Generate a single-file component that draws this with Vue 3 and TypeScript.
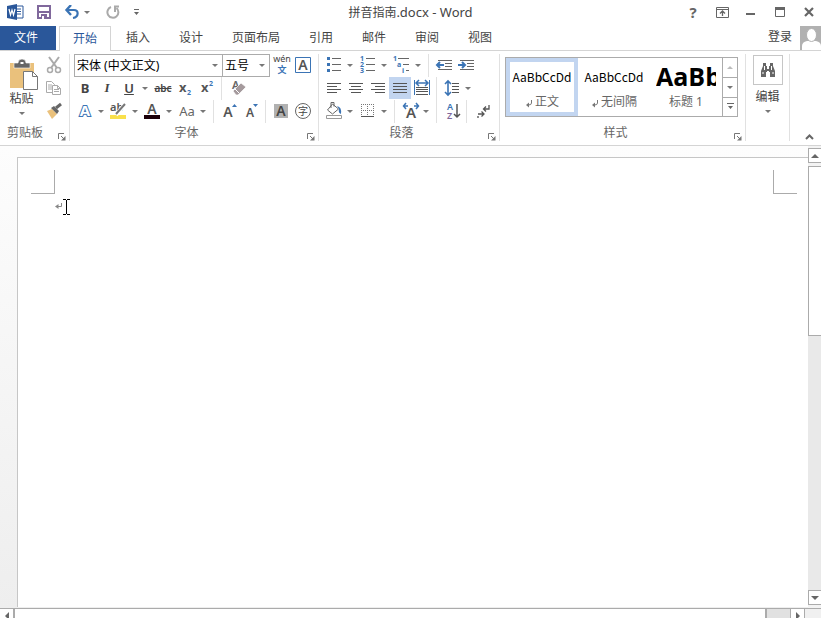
<script setup lang="ts">
import { ref } from 'vue'

interface Align { id: string; label: string; lines: [number, number][] }
interface Style { id: string; name: string; sample: string; mark: boolean; big: boolean }

const tabs = ['开始', '插入', '设计', '页面布局', '引用', '邮件', '审阅', '视图']
const activeTab = ref('开始')

const aligns: Align[] = [
  { id: 'left', label: '左对齐', lines: [[4, 14], [4, 10], [4, 14], [4, 10]] },
  { id: 'center', label: '居中', lines: [[4, 14], [6, 10], [4, 14], [6, 10]] },
  { id: 'right', label: '右对齐', lines: [[4, 14], [8, 10], [4, 14], [8, 10]] },
  { id: 'justify', label: '两端对齐', lines: [[4, 14], [4, 14], [4, 14], [4, 14]] },
]
const align = ref('justify')

const styles: Style[] = [
  { id: 'body', name: '正文', sample: 'AaBbCcDd', mark: true, big: false },
  { id: 'tight', name: '无间隔', sample: 'AaBbCcDd', mark: true, big: false },
  { id: 'h1', name: '标题 1', sample: 'AaBb', mark: false, big: true },
]
const activeStyle = ref('body')
const fontName = ref('song')
const fontSize = ref('5')
</script>

<template>
  <div class="app">
    <header class="titlebar">
      <div class="quick">
        <svg class="logo" width="18" height="16" viewBox="0 0 18 16" aria-hidden="true">
          <path d="M9 2h7v12H9z" fill="#fff" stroke="#2a579a" />
          <path d="M10 5h4M10 7.500h4M10 10h4" stroke="#2a579a" />
          <path d="M0 2l10-2v16L0 14z" fill="#2a579a" />
          <path d="M2 5l1.500 6L5 6l1.500 5L8 5" fill="none" stroke="#fff" stroke-width="1.200" />
        </svg>
        <button class="qbtn save" aria-label="保存">
          <svg width="14" height="14" viewBox="0 0 14 14">
            <path d="M1 1h12v12H1z" fill="#fff" stroke="#80689c" stroke-width="2" />
            <path d="M2 7h10" stroke="#80689c" stroke-width="2" />
            <path d="M4 9h6v5H4z" fill="#80689c" /><path d="M5 11h2v3H5z" fill="#fff" />
          </svg>
        </button>
        <button class="qbtn" aria-label="撤消">
          <svg width="16" height="15" viewBox="0 0 16 15">
            <path d="M3 5h7c5 0 5 7-1 8" fill="none" stroke="#3b74b5" stroke-width="2.200" />
            <path d="M7 0L2.500 5 7 10" fill="none" stroke="#3b74b5" stroke-width="2.400" />
          </svg>
        </button>
        <button class="drop" aria-label="撤消列表"><i class="caret" /></button>
        <button class="qbtn redo" aria-label="重复">
          <svg width="15" height="15" viewBox="0 0 15 15">
            <path d="M5 2a5.500 5.500 0 1 0 5.500 1" fill="none" stroke="#aaa" stroke-width="2" />
            <path d="M13 1.500H9V7" fill="none" stroke="#aaa" stroke-width="2" />
          </svg>
        </button>
        <button class="drop custom" aria-label="自定义快速访问工具栏">
          <svg width="7" height="7" viewBox="0 0 7 7"><path d="M1 0h5v1H1zM1 3h5L3.500 6z" fill="#666" /></svg>
        </button>
      </div>
      <h1 class="title">拼音指南<span>.docx - Word</span></h1>
      <div class="window">
        <button class="help" aria-label="帮助">?</button>
        <button aria-label="功能区显示选项">
          <svg width="13" height="11" viewBox="0 0 13 11">
            <path d="M.5.5h12v10H.5zM.5 2.500h12" fill="none" stroke="#666" />
            <path d="M6.500 9V5M4 6.500L6.500 4 9 6.500" fill="none" stroke="#666" stroke-width="1.300" />
          </svg>
        </button>
        <button aria-label="最小化"><svg width="10" height="10" viewBox="0 0 10 10"><path d="M0 6h9v2H0z" fill="#666" /></svg></button>
        <button aria-label="最大化">
          <svg width="10" height="10" viewBox="0 0 10 10"><path d="M.5.5h9v9h-9z" fill="none" stroke="#666" /><path d="M0 0h10v3H0z" fill="#666" /></svg>
        </button>
        <button aria-label="关闭"><svg width="10" height="10" viewBox="0 0 10 10"><path d="M1 1l8 8M9 1L1 9" stroke="#666" stroke-width="2.200" /></svg></button>
      </div>
    </header>

    <nav class="tabs">
      <button class="file">文件</button>
      <button v-for="t in tabs" :key="t" class="tab" :class="{ active: t === activeTab }" @click="activeTab = t">{{ t }}</button>
      <a class="login" href="#">登录</a>
      <svg class="avatar" width="21" height="24" viewBox="0 0 21 24" aria-hidden="true">
        <path d="M0 0h21v24H0z" fill="#b1b1b1" />
        <path d="M2 24v-4q0-4 5-5h9q5 1 5 5v4z" fill="#fff" />
        <ellipse cx="11.500" cy="9" rx="5" ry="6.500" fill="#fff" stroke="#b1b1b1" />
      </svg>
    </nav>

    <div class="ribbon">
      <section class="group clipboard">
        <div class="body cols">
          <button class="paste">
            <svg width="28" height="32" viewBox="0 0 28 32">
              <path d="M0 4h24v25H0z" fill="#eac17c" />
              <path d="M4 9V4h4q0-4 4-4t4 4h4v5z" fill="#666" stroke="#fff" stroke-width=".6" />
              <path d="M10.500 3h3v2h-3z" fill="#fff" />
              <path d="M13.500 12.500h9l5 5v13h-14z" fill="#fff" stroke="#777" />
              <path d="M22.500 12.500v5h5" fill="none" stroke="#777" />
            </svg>
            <span>粘贴</span><i class="caret" />
          </button>
          <div class="side">
            <button class="ib" aria-label="剪切">
              <svg viewBox="0 0 22 22">
                <path d="M6 3l8 11M16 3L8 14" stroke="#aaa" stroke-width="2" />
                <circle cx="7" cy="16" r="2.500" fill="none" stroke="#aaa" stroke-width="1.500" />
                <circle cx="15" cy="16" r="2.500" fill="none" stroke="#aaa" stroke-width="1.500" />
              </svg>
            </button>
            <button class="ib" aria-label="复制">
              <svg viewBox="0 0 22 22" fill="#fff" stroke="#aaa">
                <path d="M3.500 4.500h5l3 3v8h-8zM5 8h4M5 10h4M5 12h4" />
                <path d="M9.500 8.500h5l3 3v6h-8zM14.500 8.500v3h3M11 12.500h5M11 14.500h5" />
              </svg>
            </button>
            <button class="ib" aria-label="格式刷">
              <svg viewBox="0 0 22 22">
                <path d="M4 11l5-2 5 5-5 5z" fill="#eac17c" />
                <path d="M8 8l3-2 5 5-2 3z" fill="#666" /><path d="M13 8l5-4" stroke="#666" stroke-width="3" />
              </svg>
            </button>
          </div>
        </div>
        <footer><span>剪贴板</span><button class="launch" aria-label="剪贴板设置"><svg viewBox="0 0 8 8"><path d="M.5 6V.5H6M3 3l3 3" fill="none" stroke="#777" /><path d="M7.500 3v4.500H3z" fill="#777" /></svg></button></footer>
      </section>

      <section class="group font">
        <div class="body">
          <div class="row">
            <label class="combo wide"><select v-model="fontName" aria-label="字体"><option value="song">宋体 (中文正文)</option></select><i class="caret" /></label>
            <label class="combo"><select v-model="fontSize" aria-label="字号"><option value="5">五号</option></select><i class="caret" /></label>
            <button class="ib" aria-label="拼音指南">
              <svg viewBox="0 0 22 22"><text x="12" y="8" text-anchor="middle" font-size="9" fill="#444">wén</text><text x="12" y="19" text-anchor="middle" font-size="9" font-weight="bold" fill="#3b74b5">文</text></svg>
            </button>
            <button class="ib" aria-label="字符边框">
              <svg viewBox="0 0 22 22"><path d="M3.500 3.500h15v15h-15z" fill="none" stroke="#3b74b5" /><text x="11" y="16" text-anchor="middle" font-size="14" font-weight="600" fill="#555">A</text></svg>
            </button>
          </div>
          <div class="row">
            <button class="ib b" aria-label="加粗">B</button>
            <button class="ib i" aria-label="倾斜">I</button>
            <button class="ib u" aria-label="下划线">U</button>
            <button class="drop" aria-label="下划线类型"><i class="caret" /></button>
            <button class="ib s" aria-label="删除线">abc</button>
            <button class="ib" aria-label="下标"><svg viewBox="0 0 22 22"><text x="5" y="15" font-size="13" font-weight="bold" fill="#555">x</text><text x="13" y="18" font-size="7" font-weight="bold" fill="#3b74b5">2</text></svg></button>
            <button class="ib" aria-label="上标"><svg viewBox="0 0 22 22"><text x="5" y="15" font-size="13" font-weight="bold" fill="#555">x</text><text x="13" y="9" font-size="7" font-weight="bold" fill="#3b74b5">2</text></svg></button>
            <i class="sep" />
            <button class="ib" aria-label="清除格式"><svg viewBox="0 0 22 22"><text x="6" y="12" font-size="11" font-weight="600" fill="#666">A</text><path d="M7 14l8-8 5 4-8 8h-2z" fill="#a59a9d" stroke="#fff" stroke-width=".7" /><path d="M9 12l4 4" stroke="#fff" /></svg></button>
          </div>
          <div class="row">
            <button class="ib" aria-label="文本效果"><svg viewBox="0 0 22 22"><text x="11" y="16" text-anchor="middle" font-size="15" font-weight="bold" fill="#fff" stroke="#3b74b5" paint-order="stroke" stroke-width="2">A</text></svg></button>
            <button class="drop" aria-label="更多文本效果"><i class="caret" /></button>
            <button class="ib" aria-label="突出显示"><svg viewBox="0 0 22 22"><path d="M2 15h16v4H2z" fill="#f9e04c" /><text x="2" y="11" font-size="11" font-weight="600" fill="#555">ab</text><path d="M8 15l9-11" stroke="#fff" stroke-width="4" /><path d="M8 14l9-10" stroke="#777" stroke-width="2" /></svg></button>
            <button class="drop" aria-label="突出显示颜色"><i class="caret" /></button>
            <button class="ib" aria-label="字体颜色"><svg viewBox="0 0 22 22"><path d="M2 15h16v4H2z" fill="#1b0008" /><text x="10" y="14" text-anchor="middle" font-size="14" font-weight="600" fill="#555">A</text></svg></button>
            <button class="drop" aria-label="更多字体颜色"><i class="caret" /></button>
            <button class="ib case" aria-label="更改大小写">Aa</button>
            <button class="drop" aria-label="大小写选项"><i class="caret" /></button>
            <i class="sep" />
            <button class="ib" aria-label="增大字号"><svg viewBox="0 0 22 22"><text x="10" y="17" text-anchor="middle" font-size="14" font-weight="600" fill="#555">A</text><path d="M14 7l2.500-3L19 7z" fill="#3b74b5" /></svg></button>
            <button class="ib" aria-label="减小字号"><svg viewBox="0 0 22 22"><text x="10" y="17" text-anchor="middle" font-size="12" font-weight="600" fill="#555">A</text><path d="M13 4h5l-2.500 3z" fill="#3b74b5" /></svg></button>
            <i class="sep" />
            <button class="ib" aria-label="字符底纹"><svg viewBox="0 0 22 22"><path d="M4 4h14v14H4z" fill="#b1b1b1" /><text x="11" y="16" text-anchor="middle" font-size="14" font-weight="600" fill="#444">A</text></svg></button>
            <button class="ib" aria-label="带圈字符"><svg viewBox="0 0 22 22"><circle cx="11" cy="11" r="7.500" fill="none" stroke="#666" /><text x="11" y="15" text-anchor="middle" font-size="10" fill="#444">字</text></svg></button>
          </div>
        </div>
        <footer><span>字体</span><button class="launch" aria-label="字体设置"><svg viewBox="0 0 8 8"><path d="M.5 6V.5H6M3 3l3 3" fill="none" stroke="#777" /><path d="M7.500 3v4.500H3z" fill="#777" /></svg></button></footer>
      </section>

      <section class="group para">
        <div class="body">
          <div class="row">
            <button class="ib" aria-label="项目符号"><svg viewBox="0 0 22 22"><path d="M4 3h3v3H4zM4 9h3v3H4zM4 15h3v3H4z" fill="#3b74b5" /><path d="M9 4h9v1H9zM9 10h9v1H9zM9 16h9v1H9z" fill="#666" /></svg></button>
            <button class="drop" aria-label="项目符号库"><i class="caret" /></button>
            <button class="ib" aria-label="编号"><svg viewBox="0 0 22 22"><g font-size="7" font-weight="bold" fill="#3b74b5"><text x="3" y="7">1</text><text x="3" y="13">2</text><text x="3" y="19">3</text></g><path d="M9 4h9v1H9zM9 10h9v1H9zM9 16h9v1H9z" fill="#666" /></svg></button>
            <button class="drop" aria-label="编号库"><i class="caret" /></button>
            <button class="ib" aria-label="多级列表"><svg viewBox="0 0 22 22"><g font-size="7" font-weight="bold" fill="#3b74b5"><text x="2" y="7">1</text><text x="6" y="13">a</text><text x="11" y="19">i</text></g><path d="M7 4h11v1H7zM12 10h6v1h-6zM15 16h3v1h-3z" fill="#666" /></svg></button>
            <button class="drop" aria-label="列表库"><i class="caret" /></button>
            <i class="sep" />
            <button class="ib" aria-label="减少缩进量"><svg viewBox="0 0 22 22"><path d="M5 6h14v1H5zM12 9h7v1h-7zM12 12h7v1h-7zM5 15h14v1H5z" fill="#666" /><path d="M4 11h7M7 8l-3 3 3 3" fill="none" stroke="#3b74b5" stroke-width="2" /></svg></button>
            <button class="ib" aria-label="增加缩进量"><svg viewBox="0 0 22 22"><path d="M5 6h14v1H5zM12 9h7v1h-7zM12 12h7v1h-7zM5 15h14v1H5z" fill="#666" /><path d="M3 11h7M7 8l3 3-3 3" fill="none" stroke="#3b74b5" stroke-width="2" /></svg></button>
          </div>
          <div class="row">
            <button v-for="a in aligns" :key="a.id" class="ib" :class="{ on: a.id === align }" :aria-label="a.label" @click="align = a.id">
              <svg viewBox="0 0 22 22"><rect v-for="(l, n) in a.lines" :key="n" :x="l[0]" :y="6 + n * 3" :width="l[1]" height="1" fill="#555" /></svg>
            </button>
            <button class="ib" aria-label="分散对齐"><svg viewBox="0 0 22 22"><path d="M3.500 3v15M18.500 3v15" stroke="#3b74b5" /><path d="M5 6h12M8 3L5 6l3 3M14 3l3 3-3 3" fill="none" stroke="#3b74b5" stroke-width="1.500" /><path d="M5 10h12v1H5zM5 12h12v1H5zM5 14h12v1H5zM5 17h12v1H5z" fill="#555" /></svg></button>
            <i class="sep" />
            <button class="ib" aria-label="行和段落间距"><svg viewBox="0 0 22 22"><path d="M7 4v14M4 7l3-3 3 3M4 15l3 3 3-3" fill="none" stroke="#3b74b5" stroke-width="1.600" /><path d="M11 6h7v1h-7zM11 9h7v1h-7zM11 12h7v1h-7zM11 15h7v1h-7z" fill="#555" /></svg></button>
            <button class="drop" aria-label="行距选项"><i class="caret" /></button>
          </div>
          <div class="row">
            <button class="ib" aria-label="底纹"><svg viewBox="0 0 22 22"><path d="M3.500 15.500h15v3h-15z" fill="#fff" stroke="#999" /><path d="M9.500 4l6 5-6 5-5-4zM8 8V2.500h3v4" fill="#fff" stroke="#666" /><path d="M14 6q5 1 4 8-3-1-2-5z" fill="#3b74b5" /></svg></button>
            <button class="drop" aria-label="底纹颜色"><i class="caret" /></button>
            <button class="ib" aria-label="边框"><svg viewBox="0 0 22 22"><path d="M4 4.500h13M4 10.500h13M4.500 4v13M10.500 4v13M16.500 4v13" stroke="#777" stroke-dasharray="1 1" /><path d="M4 16.500h13" stroke="#555" /></svg></button>
            <button class="drop" aria-label="边框选项"><i class="caret" /></button>
            <i class="sep" />
            <button class="ib" aria-label="中文版式"><svg viewBox="0 0 22 22"><text x="12" y="18" text-anchor="middle" font-size="15" font-weight="600" fill="#555">A</text><path d="M9 6H5M7 3L4.500 6 7 9M15 6h4M17 3l2.500 3L17 9" fill="none" stroke="#3b74b5" stroke-width="1.500" /></svg></button>
            <button class="drop" aria-label="版式选项"><i class="caret" /></button>
            <i class="sep" />
            <button class="ib" aria-label="排序"><svg viewBox="0 0 22 22"><text x="6" y="10" font-size="9" font-weight="600" fill="#3b74b5">A</text><text x="6" y="19" font-size="9" font-weight="600" fill="#80689c">Z</text><path d="M16 4v13M13 14l3 3 3-3" fill="none" stroke="#555" stroke-width="1.500" /></svg></button>
            <i class="sep" />
            <button class="ib" aria-label="显示编辑标记"><svg viewBox="0 0 22 22"><path d="M18 5v4h-5M15 6.500L12.500 9l2.500 2.500M7 14h6M10.500 11.500L13 14l-2.500 2.500M7 16v2" fill="none" stroke="#555" stroke-width="1.300" /></svg></button>
          </div>
        </div>
        <footer><span>段落</span><button class="launch" aria-label="段落设置"><svg viewBox="0 0 8 8"><path d="M.5 6V.5H6M3 3l3 3" fill="none" stroke="#777" /><path d="M7.500 3v4.500H3z" fill="#777" /></svg></button></footer>
      </section>

      <section class="group styles">
        <div class="body">
          <div class="gallery">
            <button v-for="s in styles" :key="s.id" class="style" :class="{ chosen: s.id === activeStyle }" @click="activeStyle = s.id">
              <span class="sample" :class="{ big: s.big }">{{ s.sample }}</span>
              <span class="name">
                <svg v-if="s.mark" width="8" height="8" viewBox="0 0 8 8"><path d="M6.500 0v3q0 2-3 2" fill="none" stroke="#777" /><path d="M4 2.500v5L1 5z" fill="#777" /></svg>
                {{ s.name }}
              </span>
            </button>
            <div class="scroller">
              <button disabled aria-label="上一行"><i class="caret up" /></button>
              <button aria-label="下一行"><i class="caret" /></button>
              <button aria-label="其他样式"><svg width="7" height="7" viewBox="0 0 7 7"><path d="M0 0h7v1H0zM1 3h5L3.500 6z" fill="#666" /></svg></button>
            </div>
          </div>
        </div>
        <footer><span>样式</span><button class="launch" aria-label="样式窗格"><svg viewBox="0 0 8 8"><path d="M.5 6V.5H6M3 3l3 3" fill="none" stroke="#777" /><path d="M7.500 3v4.500H3z" fill="#777" /></svg></button></footer>
      </section>

      <section class="group edit">
        <button class="find">
          <span class="box">
            <svg width="16" height="14" viewBox="0 0 16 14">
              <path d="M3 0h3v3h1v3h2V3h1V0h3v3l2 5v6h-5V9H9v-1H7v1H6v5H1V8l2-5z" fill="#666" />
              <path d="M2 10h2M12 10h2M4.500 3v4M11.500 3v4" stroke="#fff" />
            </svg>
          </span>
          <span>编辑</span><i class="caret" />
        </button>
      </section>
      <button class="collapse" aria-label="折叠功能区"><svg width="9" height="6" viewBox="0 0 9 6"><path d="M1 5l3.500-3.500L8 5" fill="none" stroke="#666" stroke-width="2" /></svg></button>
    </div>

    <main class="work">
      <article class="page">
        <div class="margins"><i class="corner tl" /><i class="corner tr" /></div>
        <div class="line">
          <svg width="8" height="8" viewBox="0 0 8 8" aria-hidden="true"><path d="M6.500 0v3.500H2" fill="none" stroke="#888" /><path d="M3.500 1v5L0 3.500z" fill="#888" /></svg>
          <svg class="ibeam" width="7" height="16" viewBox="0 0 7 16" aria-hidden="true"><path d="M0 .5h3M4 .5h3M3.500 1v14M0 15.500h3M4 15.500h3" stroke="#000" /></svg>
        </div>
      </article>
      <div class="vbar">
        <button class="end" aria-label="向上滚动"><i class="tri up" /></button>
        <div class="track"><div class="thumb" /></div>
        <button class="end" aria-label="向下滚动"><i class="tri" /></button>
      </div>
    </main>
    <div class="hbar">
      <button class="hend first" aria-label="向左滚动"><svg width="4" height="8" viewBox="0 0 4 8"><path d="M4 0v8L0 4z" fill="#666" /></svg></button>
      <div class="htrack"><div class="hthumb" /></div>
      <button class="hend" aria-label="向右滚动"><svg width="4" height="8" viewBox="0 0 4 8"><path d="M0 0v8l4-4z" fill="#666" /></svg></button>
    </div>
  </div>
</template>

<style>
body { margin: 0; overflow: hidden; }
</style>

<style scoped>
* { box-sizing: border-box; }
.app {
  display: flex; flex-direction: column; height: 100vh; background: #fff; color: #444;
  font: 12px/16px "Noto Sans", "Noto Sans CJK SC", sans-serif; overflow: hidden;
}
button, select { margin: 0; padding: 0; border: 0; background: none; color: inherit; font: inherit; }
button { display: flex; align-items: center; justify-content: center; }
svg { display: block; flex: none; }
.caret { flex: none; width: 0; height: 0; border: 3px solid transparent; border-top-color: #777; border-bottom: 0; }
.caret.up { border-top: 0; border-bottom: 3px solid #bbb; }
.drop { width: 12px; height: 22px; padding-right: 2px; }

.titlebar { display: grid; grid-template-columns: 1fr auto 1fr; align-items: start; height: 26px; flex: none; }
.quick { display: flex; align-items: center; height: 24px; padding-left: 7px; }
.qbtn { width: 20px; height: 22px; }
.save { margin: 0 8px 0 9px; }
.redo { margin-left: 9px; }
.custom { margin-left: 8px; }
.title { margin: 0; font-size: 12px; line-height: 24px; font-weight: 400; }
.title span { font-size: 13px; }
.window { display: flex; justify-content: flex-end; gap: 5px; }
.window button { width: 24px; height: 24px; }
.window .help { font-size: 15px; font-weight: 700; color: #666; }

.tabs { display: flex; align-items: stretch; gap: 1px; height: 25px; flex: none; border-bottom: 1px solid #d4d4d4; }
.file { width: 56px; margin-right: 2px; padding-right: 4px; background: #2a579a; color: #fff; }
.tab { padding: 0 14px; }
.tab.active { height: 25px; padding: 0 13px; border: 1px solid #d4d4d4; border-bottom: 0; background: #fff; color: #2a579a; }
.login { margin-left: auto; padding: 3px 7px 0 0; color: #444; text-decoration: none; }

.ribbon { display: flex; align-items: stretch; height: 95px; flex: none; padding: 3px 0 4px; border-bottom: 1px solid #d4d4d4; }
.group { display: flex; flex-direction: column; flex: none; border-right: 1px solid #e1e1e1; }
.group footer { display: flex; align-items: flex-end; height: 17px; color: #666; }
.group footer span { flex: 1; padding-right: 8px; text-align: center; }
.launch { width: 8px; height: 8px; margin: 0 3px 0 0; }
.launch svg { width: 8px; height: 8px; }
.body { flex: 1; }
.row { display: flex; height: 23px; }
.ib { width: 22px; height: 22px; flex: none; }
.ib svg { width: 22px; height: 22px; overflow: visible; }
.on { background: #c2d5f0; }
.sep { width: 8px; height: 23px; border-right: 1px solid #e1e1e1; margin-right: 4px; margin-left: -4px; flex: none; }

.clipboard { width: 70px; }
.cols { display: flex; }
.paste { flex-direction: column; justify-content: flex-start; width: 43px; padding-top: 5px; }
.paste svg { margin-left: 4px; }
.paste .caret { margin-top: 5px; }
.side .ib { margin-bottom: 1px; }

.font { width: 249px; padding-left: 4px; }
.combo { position: relative; width: 47px; height: 23px; border: 1px solid #ababab; color: #000; }
.combo.wide { width: 149px; }
.combo select { display: block; width: 100%; height: 21px; padding-left: 2px; appearance: none; }
.combo:not(.wide) { border-left: 0; }
.combo .caret { position: absolute; right: 4px; top: 9px; pointer-events: none; }
.b { font-size: 13px; font-weight: 700; }
.i { font: italic 700 13px/16px "Liberation Serif", serif; }
.u { font-size: 13px; font-weight: 600; text-decoration: underline; }
.s { font-size: 10px; font-weight: 600; text-decoration: line-through; }
.case { font-size: 13px; color: #666; }

.para { width: 181px; padding-left: 4px; }

.styles { width: 246px; padding-left: 5px; }
.gallery { display: flex; width: 233px; height: 60px; margin-top: 3px; border: 1px solid #ababab; }
.style { flex: 1; min-width: 0; flex-direction: column; justify-content: flex-start; padding-top: 5px; border: 4px solid transparent; }
.chosen { border-color: #c2d5f0; }
.sample { height: 20px; line-height: 20px; color: #000; font-family: "Noto Sans CJK SC", sans-serif; flex: none; }
.sample.big { max-width: 60px; clip-path: inset(-6px 0); font: 700 25px/18px "Open Sans", sans-serif; }
.name { display: flex; align-items: center; gap: 2px; margin-top: 7px; color: #666; white-space: nowrap; }
.name svg { margin-top: 3px; }
.scroller { display: grid; grid-template-rows: 1fr 1fr 1fr; width: 15px; border-left: 1px solid #ababab; }
.scroller button + button { border-top: 1px solid #ababab; }

.edit { width: 44px; align-items: center; }
.find { flex-direction: column; padding-top: 1px; }
.box { display: flex; align-items: center; justify-content: center; width: 30px; height: 30px; margin-bottom: 4px; border: 1px solid #c6c6c6; }
.find .caret { margin-top: 5px; }
.collapse { margin: auto 7px 0 auto; width: 9px; height: 8px; }

.work { display: flex; flex: 1; min-height: 0; background: linear-gradient(#fdfdfd, #eee); }
.page { flex: 1; margin: 11px 0 1px 17px; border: 1px solid #c6c6c6; border-width: 1px 0 0 1px; background: #fff; }
.margins { display: flex; justify-content: space-between; padding: 12px 11px 0 13px; }
.corner { width: 24px; height: 24px; border-bottom: 1px solid #ababab; }
.tl { border-right: 1px solid #ababab; }
.tr { border-left: 1px solid #ababab; }
.line { display: flex; align-items: center; padding: 5px 0 0 37px; }
.vbar { display: flex; flex-direction: column; width: 13px; padding: 2px 0 3px; flex: none; background: #f3f3f3; }
.end { height: 15px; border: 1px solid #ababab; border-right: 0; background: #fff; }
.tri { border: 4px solid transparent; border-top-color: #666; border-bottom: 0; }
.tri.up { border-top: 0; border-bottom: 4px solid #666; }
.track { flex: 1; margin: 3px 0 0; background: #e9e9e9; }
.thumb { height: 40%; border: 1px solid #ababab; border-right: 0; background: #fff; }
.hbar { display: flex; flex: none; height: 10px; border-top: 1px solid #ababab; padding-right: 16px; background: #f0f0f0; }
.hend { width: 15px; border: 1px solid #ababab; border-width: 0 1px; background: #fff; overflow: hidden; align-items: flex-start; padding-top: 3px; }
.hend.first { width: 13px; border: 0; }
.htrack { flex: 1; background: #e1e1e1; }
.hthumb { width: 97%; height: 10px; border: 1px solid #ababab; border-width: 0 2px; background: #fff; }
</style>
